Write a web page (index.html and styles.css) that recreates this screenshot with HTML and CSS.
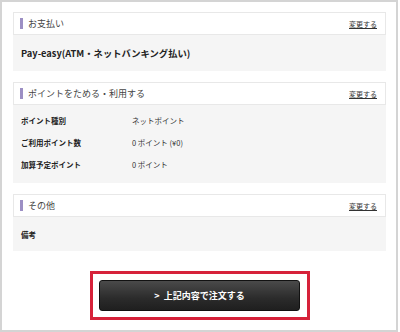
FILE: index.html
```html
<!DOCTYPE html>
<html lang="ja">
<head>
<meta charset="utf-8">
<link rel="stylesheet" href="styles.css">
</head>
<body>
<div class="frame">
  <section class="card">
    <div class="card-head">
      <span class="card-title">お支払い</span>
      <a class="change" href="#">変更する</a>
    </div>
    <div class="card-body pay">Pay-easy(ATM・ネットバンキング払い)</div>
  </section>

  <section class="card">
    <div class="card-head">
      <span class="card-title">ポイントをためる・利用する</span>
      <a class="change" href="#">変更する</a>
    </div>
    <div class="card-body rows">
      <div class="row"><span class="label">ポイント種別</span><span class="value">ネットポイント</span></div>
      <div class="row"><span class="label">ご利用ポイント数</span><span class="value">0 ポイント (¥0)</span></div>
      <div class="row"><span class="label">加算予定ポイント</span><span class="value">0 ポイント</span></div>
    </div>
  </section>

  <section class="card">
    <div class="card-head">
      <span class="card-title">その他</span>
      <a class="change" href="#">変更する</a>
    </div>
    <div class="card-body note"><span class="label">備考</span></div>
  </section>

  <div class="submit-wrap">
    <div class="submit-outline">
      <button class="submit" type="button">&gt;&nbsp;&nbsp;上記内容で注文する</button>
    </div>
  </div>
</div>
</body>
</html>
```

FILE: styles.css
```css
* { box-sizing: border-box; }
html, body { margin: 0; padding: 0; background: #fff; }
body {
  font-family: "Noto Sans CJK JP", "Noto Sans", sans-serif;
  color: #333;
}
.frame {
  width: 398px;
  height: 332px;
  border: 2px solid #d4d4d4;
  padding: 10px 10px 0 11px;
  display: flex;
  flex-direction: column;
  gap: 11px;
}
.card {
  display: flex;
  flex-direction: column;
}
.card-head {
  height: 23px;
  border: 1px solid #e8e8e8;
  background: #fff;
  display: flex;
  align-items: center;
  justify-content: space-between;
  padding: 0 8px 0 6px;
}
.card-title {
  font-size: 9px;
  color: #444;
  display: flex;
  align-items: center;
}
.card-title::before {
  content: "";
  display: inline-block;
  width: 3px;
  height: 11px;
  background: #9c8fc4;
  margin-right: 5px;
}
.change {
  font-size: 7px;
  color: #333;
  text-decoration: underline;
}
.card-body {
  background: #f5f5f5;
  padding-left: 8px;
}
.pay {
  height: 36px;
  display: flex;
  align-items: center;
  font-size: 9.3px;
  font-weight: bold;
  color: #222;
}
.rows {
  height: 78px;
  padding-top: 4px;
  display: flex;
  flex-direction: column;
}
.row {
  height: 22px;
  display: flex;
  align-items: center;
  font-size: 7.5px;
}
.label {
  font-weight: bold;
  width: 111px;
  color: #222;
  font-size: 7.5px;
}
.value { color: #333; }
.note {
  height: 34px;
  display: flex;
  align-items: center;
}
.submit-wrap {
  display: flex;
  justify-content: flex-start;
  margin-top: 9px;
  padding-left: 77px;
}
.submit-outline {
  width: 220px;
  height: 49px;
  border: 3px solid #d6223a;
  padding: 6px 7px 6px 6px;
}
.submit {
  display: block;
  width: 201px;
  height: 31px;
  border: 1px solid #111;
  border-radius: 3px;
  background: linear-gradient(#4a4a4a, #2b2b2b 60%, #1f1f1f);
  color: #fff;
  font-family: "Noto Sans CJK JP", "Noto Sans", sans-serif;
  font-size: 9px;
  font-weight: bold;
  padding: 0;
}
```
